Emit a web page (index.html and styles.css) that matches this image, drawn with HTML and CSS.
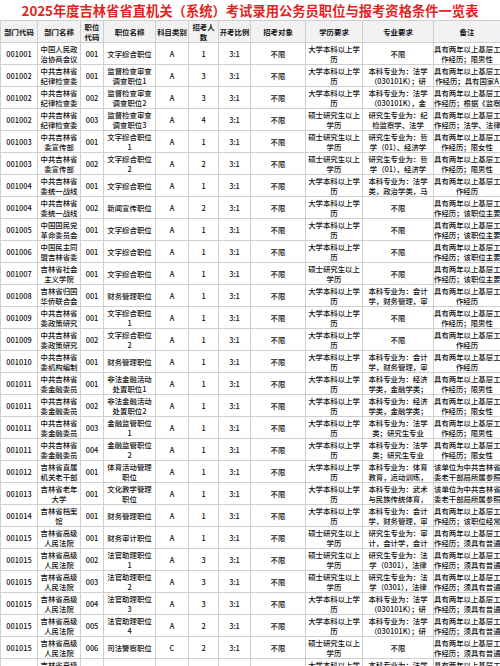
FILE: index.html
```html
<!DOCTYPE html>
<html lang="zh">
<head>
<meta charset="utf-8">
<title>2025年度吉林省省直机关（系统）考试录用公务员职位与报考资格条件一览表</title>
<link rel="stylesheet" href="styles.css">
</head>
<body>
<div class="page">
<h1 class="title">2025年度吉林省省直机关（系统）考试录用公务员职位与报考资格条件一览表</h1>
<table class="grid">
<colgroup>
<col class="c1"><col class="c2"><col class="c3"><col class="c4"><col class="c5"><col class="c6"><col class="c7"><col class="c8"><col class="c9"><col class="c10"><col class="c11">
</colgroup>
<thead>
<tr><th>部门代码</th><th>部门名称</th><th>职位<br>代码</th><th>职位名称</th><th>科目类别</th><th>招考人<br>数</th><th>开考比例</th><th>招考对象</th><th>学历要求</th><th>专业要求</th><th>备注</th></tr>
</thead>
<tbody>
<tr><td>001001</td><td>中国人民政<br>治协商会议</td><td>001</td><td>文字综合职位</td><td>A</td><td>1</td><td>3:1</td><td>不限</td><td>大学本科以上学<br>历</td><td>不限</td><td>具有两年以上基层工<br>作经历；限男性</td></tr>
<tr><td>001002</td><td>中共吉林省<br>纪律检查委</td><td>001</td><td>监督检查审查<br>调查职位1</td><td>A</td><td>3</td><td>3:1</td><td>不限</td><td>大学本科以上学<br>历</td><td>本科专业为：法学<br>（030101K）；研</td><td>具有两年以上基层工<br>作经历；具有国家A</td></tr>
<tr><td>001002</td><td>中共吉林省<br>纪律检查委</td><td>002</td><td>监督检查审查<br>调查职位2</td><td>A</td><td>3</td><td>3:1</td><td>不限</td><td>大学本科以上学<br>历</td><td>本科专业为：法学<br>（030101K），金</td><td>具有两年以上基层工<br>作经历；根据《监察</td></tr>
<tr><td>001002</td><td>中共吉林省<br>纪律检查委</td><td>003</td><td>监督检查审查<br>调查职位3</td><td>A</td><td>4</td><td>3:1</td><td>不限</td><td>硕士研究生以上<br>学历</td><td>研究生专业为：纪<br>检监察学、法学</td><td>具有两年以上基层工<br>作经历；法学、法律</td></tr>
<tr><td>001003</td><td>中共吉林省<br>委宣传部</td><td>001</td><td>文字综合职位<br>1</td><td>A</td><td>1</td><td>3:1</td><td>不限</td><td>硕士研究生以上<br>学历</td><td>研究生专业为：哲<br>学（01）、经济学</td><td>具有两年以上基层工<br>作经历；限女性</td></tr>
<tr><td>001003</td><td>中共吉林省<br>委宣传部</td><td>002</td><td>文字综合职位<br>2</td><td>A</td><td>2</td><td>3:1</td><td>不限</td><td>硕士研究生以上<br>学历</td><td>研究生专业为：哲<br>学（01）、经济学</td><td>具有两年以上基层工<br>作经历；限男性</td></tr>
<tr><td>001004</td><td>中共吉林省<br>委统一战线</td><td>001</td><td>文字综合职位</td><td>A</td><td>1</td><td>3:1</td><td>不限</td><td>大学本科以上学<br>历</td><td>本科专业为：法学<br>类，政治学类，马</td><td>具有两年以上基层工<br>作经历</td></tr>
<tr><td>001004</td><td>中共吉林省<br>委统一战线</td><td>002</td><td>新闻宣传职位</td><td>A</td><td>2</td><td>3:1</td><td>不限</td><td>大学本科以上学<br>历</td><td>不限</td><td>具有两年以上基层工<br>作经历；该职位主要</td></tr>
<tr><td>001005</td><td>中国国民党<br>革命委员会</td><td>001</td><td>文字综合职位</td><td>A</td><td>1</td><td>3:1</td><td>不限</td><td>大学本科以上学<br>历</td><td>不限</td><td>具有两年以上基层工<br>作经历；该职位主要</td></tr>
<tr><td>001006</td><td>中国民主同<br>盟吉林省委</td><td>001</td><td>文字综合职位</td><td>A</td><td>1</td><td>3:1</td><td>不限</td><td>大学本科以上学<br>历</td><td>不限</td><td>具有两年以上基层工<br>作经历；该职位主要</td></tr>
<tr><td>001007</td><td>吉林省社会<br>主义学院</td><td>001</td><td>文字综合职位</td><td>A</td><td>1</td><td>3:1</td><td>不限</td><td>硕士研究生以上<br>学历</td><td>不限</td><td>具有两年以上基层工<br>作经历；该职位主要</td></tr>
<tr><td>001008</td><td>吉林省归国<br>华侨联合会</td><td>001</td><td>财务管理职位</td><td>A</td><td>1</td><td>3:1</td><td>不限</td><td>大学本科以上学<br>历</td><td>本科专业为：会计<br>学，财务管理，审</td><td>具有两年以上基层工<br>作经历</td></tr>
<tr><td>001009</td><td>中共吉林省<br>委政策研究</td><td>001</td><td>文字综合职位<br>1</td><td>A</td><td>1</td><td>3:1</td><td>不限</td><td>大学本科以上学<br>历</td><td>不限</td><td>具有两年以上基层工<br>作经历；限男性</td></tr>
<tr><td>001009</td><td>中共吉林省<br>委政策研究</td><td>002</td><td>文字综合职位<br>2</td><td>A</td><td>1</td><td>3:1</td><td>不限</td><td>大学本科以上学<br>历</td><td>不限</td><td>具有两年以上基层工<br>作经历</td></tr>
<tr><td>001010</td><td>中共吉林省<br>委机构编制</td><td>001</td><td>财务管理职位</td><td>A</td><td>1</td><td>3:1</td><td>不限</td><td>大学本科以上学<br>历</td><td>本科专业为：会计<br>学，财务管理，审</td><td>具有两年以上基层工<br>作经历</td></tr>
<tr><td>001011</td><td>中共吉林省<br>委金融委员</td><td>001</td><td>非法金融活动<br>处置职位1</td><td>A</td><td>1</td><td>3:1</td><td>不限</td><td>大学本科以上学<br>历</td><td>本科专业为：经济<br>学类，金融学类；</td><td>具有两年以上基层工<br>作经历；限男性</td></tr>
<tr><td>001011</td><td>中共吉林省<br>委金融委员</td><td>002</td><td>非法金融活动<br>处置职位2</td><td>A</td><td>1</td><td>3:1</td><td>不限</td><td>大学本科以上学<br>历</td><td>本科专业为：经济<br>学类，金融学类；</td><td>具有两年以上基层工<br>作经历；限女性</td></tr>
<tr><td>001011</td><td>中共吉林省<br>委金融委员</td><td>003</td><td>金融监管职位<br>1</td><td>A</td><td>1</td><td>3:1</td><td>不限</td><td>大学本科以上学<br>历</td><td>本科专业为：法学<br>类；研究生专业</td><td>具有两年以上基层工<br>作经历；限男性</td></tr>
<tr><td>001011</td><td>中共吉林省<br>委金融委员</td><td>004</td><td>金融监管职位<br>2</td><td>A</td><td>1</td><td>3:1</td><td>不限</td><td>大学本科以上学<br>历</td><td>本科专业为：法学<br>类；研究生专业</td><td>具有两年以上基层工<br>作经历；限女性</td></tr>
<tr><td>001012</td><td>吉林省直属<br>机关老干部</td><td>001</td><td>体育活动管理<br>职位</td><td>A</td><td>1</td><td>3:1</td><td>不限</td><td>大学本科以上学<br>历</td><td>本科专业为：体育<br>教育，运动训练，</td><td>该单位为中共吉林省<br>委老干部局所属参照</td></tr>
<tr><td>001013</td><td>吉林省老年<br>大学</td><td>001</td><td>文化教学管理<br>职位</td><td>A</td><td>1</td><td>3:1</td><td>不限</td><td>大学本科以上学<br>历</td><td>本科专业为：武术<br>与民族传统体育，</td><td>该单位为中共吉林省<br>委老干部局所属参照</td></tr>
<tr><td>001014</td><td>吉林省档案<br>馆</td><td>001</td><td>财务管理职位</td><td>A</td><td>1</td><td>3:1</td><td>不限</td><td>大学本科以上学<br>历</td><td>本科专业为：会计<br>学，财务管理，审</td><td>具有两年以上基层工<br>作经历；该职位经常</td></tr>
<tr><td>001015</td><td>吉林省高级<br>人民法院</td><td>001</td><td>财务审计职位</td><td>A</td><td>1</td><td>3:1</td><td>不限</td><td>硕士研究生以上<br>学历</td><td>研究生专业为：审<br>计，会计学，会计</td><td>具有两年以上基层工<br>作经历；须具有普通</td></tr>
<tr><td>001015</td><td>吉林省高级<br>人民法院</td><td>002</td><td>法官助理职位<br>1</td><td>A</td><td>3</td><td>3:1</td><td>不限</td><td>硕士研究生以上<br>学历</td><td>研究生专业为：法<br>学（0301），法律</td><td>具有两年以上基层工<br>作经历；须具有普通</td></tr>
<tr><td>001015</td><td>吉林省高级<br>人民法院</td><td>003</td><td>法官助理职位<br>2</td><td>A</td><td>3</td><td>3:1</td><td>不限</td><td>硕士研究生以上<br>学历</td><td>研究生专业为：法<br>学（0301），法律</td><td>具有两年以上基层工<br>作经历；须具有普通</td></tr>
<tr><td>001015</td><td>吉林省高级<br>人民法院</td><td>004</td><td>法官助理职位<br>3</td><td>A</td><td>3</td><td>3:1</td><td>不限</td><td>大学本科以上学<br>历</td><td>本科专业为：法学<br>（030101K）；研</td><td>具有两年以上基层工<br>作经历；须具有普通</td></tr>
<tr><td>001015</td><td>吉林省高级<br>人民法院</td><td>005</td><td>法官助理职位<br>4</td><td>A</td><td>2</td><td>3:1</td><td>不限</td><td>大学本科以上学<br>历</td><td>本科专业为：法学<br>（030101K）；研</td><td>具有两年以上基层工<br>作经历；须具有普通</td></tr>
<tr><td>001015</td><td>吉林省高级<br>人民法院</td><td>006</td><td>司法警察职位</td><td>C</td><td>2</td><td>3:1</td><td>不限</td><td>硕士研究生以上<br>学历</td><td>不限</td><td>具有两年以上基层工<br>作经历；须具有普通</td></tr>
<tr><td>001015</td><td>吉林省高级<br>人民法院</td><td>007</td><td>司法警察职位</td><td>A</td><td>1</td><td>3:1</td><td>不限</td><td>大学本科以上学<br>历</td><td>本科专业为：法学<br>类</td><td>具有两年以上基层工<br>作经历</td></tr>
</tbody>
</table>
</div>
</body>
</html>
```

FILE: styles.css
```css
html, body {
  margin: 0;
  padding: 0;
  background: #ffffff;
}

.page {
  width: 500px;
  height: 666px;
  overflow: hidden;
  font-family: "Noto Sans CJK SC", "Noto Sans", sans-serif;
  color: #111;
}

.title {
  margin: 0;
  height: 20px;
  line-height: 21px;
  font-size: 13.3px;
  font-weight: 700;
  color: #e3231d;
  text-align: center;
  white-space: nowrap;
}

.grid {
  width: 500px;
  table-layout: fixed;
  border-collapse: collapse;
  font-size: 7.4px;
  line-height: 9.6px;
  font-weight: 500;
}

.c1 { width: 37px; }
.c2 { width: 43px; }
.c3 { width: 23px; }
.c4 { width: 52px; }
.c5 { width: 33px; }
.c6 { width: 30px; }
.c7 { width: 32px; }
.c8 { width: 55px; }
.c9 { width: 57px; }
.c10 { width: 71px; }
.c11 { width: 67px; }

.grid tr {
  height: 22px;
}

.grid th,
.grid td {
  border: 1px solid #cfcfcf;
  padding: 0;
  text-align: center;
  vertical-align: middle;
  white-space: nowrap;
  overflow: hidden;
}

.grid th {
  background: #f2f2f2;
  font-weight: 700;
  color: #111;
}
```
